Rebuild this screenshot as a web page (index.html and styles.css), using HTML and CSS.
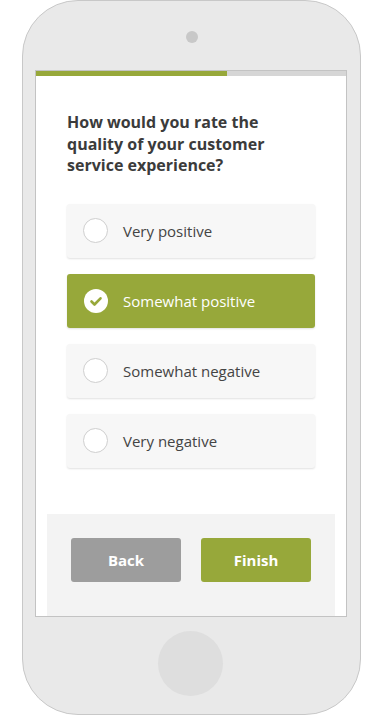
FILE: index.html
```html
<!DOCTYPE html>
<html>
<head>
	<title>Customer Survey</title>
	<meta charset="utf-8">
	<link rel="stylesheet" href="styles.css">
</head>
<body>
	<div class="phone">
		<div class="camera"></div>
		<div class="screen">
			<div class="progress"><div class="bar"></div></div>
			<main>
				<h2>How would you rate the quality of your customer service experience?</h2>
				<ul class="options">
					<li class="option"><span class="radio"></span>Very positive</li>
					<li class="option selected">
						<span class="radio">
							<svg viewBox="0 0 24 24" width="24" height="24"><circle cx="12" cy="12" r="12" fill="#fff"/><path d="M7.5 12.5l3 3 6-6.2" fill="none" stroke="#97a83a" stroke-width="2.6" stroke-linecap="round" stroke-linejoin="round"/></svg>
						</span>Somewhat positive</li>
					<li class="option"><span class="radio"></span>Somewhat negative</li>
					<li class="option"><span class="radio"></span>Very negative</li>
				</ul>
			</main>
			<footer>
				<button class="back">Back</button>
				<button class="finish">Finish</button>
			</footer>
		</div>
		<div class="home"></div>
	</div>
</body>
</html>
```

FILE: styles.css
```css
body {
	margin: 0;
	background: #fff;
	font-family: "Open Sans", sans-serif;
}

/* device frame */
.phone {
	box-sizing: border-box;
	width: 339px;
	height: 715px;
	margin-left: 22px;
	background: #e9e9e9;
	border: 1px solid #c8c8c8;
	border-radius: 56px;
	display: flex;
	flex-direction: column;
	align-items: center;
}
.camera {
	width: 12px;
	height: 12px;
	margin-top: 30px;
	border-radius: 50%;
	background: #c8c8c8;
}
.screen {
	box-sizing: border-box;
	width: 312px;
	height: 547px;
	margin-top: 27px;
	margin-right: 1px;
	background: #fff;
	border: 1px solid #c3c3c3;
	display: flex;
	flex-direction: column;
	overflow: hidden;
}
.home {
	width: 65px;
	height: 65px;
	margin-top: 14px;
	margin-right: 2px;
	border-radius: 50%;
	background: #dedede;
}

/* progress */
.progress {
	height: 5px;
	flex-shrink: 0;
	background: #d6d6d6;
}
.progress .bar {
	width: 191px;
	height: 100%;
	background: #97a83a;
}

/* question */
main {
	padding: 36px 31px 0;
	height: 438px;
	flex-shrink: 0;
	box-sizing: border-box;
}
h2 {
	margin: 0;
	font-size: 16px;
	line-height: 21.5px;
	font-weight: 700;
	color: #3b3b3b;
	padding-right: 20px;
}
.options {
	list-style: none;
	margin: 27px 0 0;
	padding: 0;
	display: flex;
	flex-direction: column;
	gap: 16px;
}
.option {
	height: 54px;
	display: flex;
	align-items: center;
	padding-left: 16px;
	background: #f7f7f7;
	border-radius: 3px;
	box-shadow: 0 1px 2px rgba(0,0,0,.12);
	font-size: 15px;
	color: #444;
}
.radio {
	box-sizing: border-box;
	width: 25px;
	height: 25px;
	margin-right: 15px;
	border-radius: 50%;
	border: 1px solid #cfcfcf;
	background: #fff;
	display: flex;
	align-items: center;
	justify-content: center;
}
.option.selected {
	background: #97a83a;
	color: #fff;
}
.option.selected .radio {
	border: none;
	background: transparent;
}

/* buttons */
footer {
	flex: 1;
	margin: 0 11px;
	padding: 24px;
	background: #f3f3f3;
	display: flex;
	gap: 20px;
	align-items: flex-start;
}
button {
	width: 110px;
	height: 44px;
	border: none;
	border-radius: 3px;
	color: #fff;
	font-family: "Open Sans", sans-serif;
	font-size: 15px;
	font-weight: 700;
	cursor: pointer;
}
.back {
	background: #9d9d9d;
}
.finish {
	background: #97a83a;
}
```
